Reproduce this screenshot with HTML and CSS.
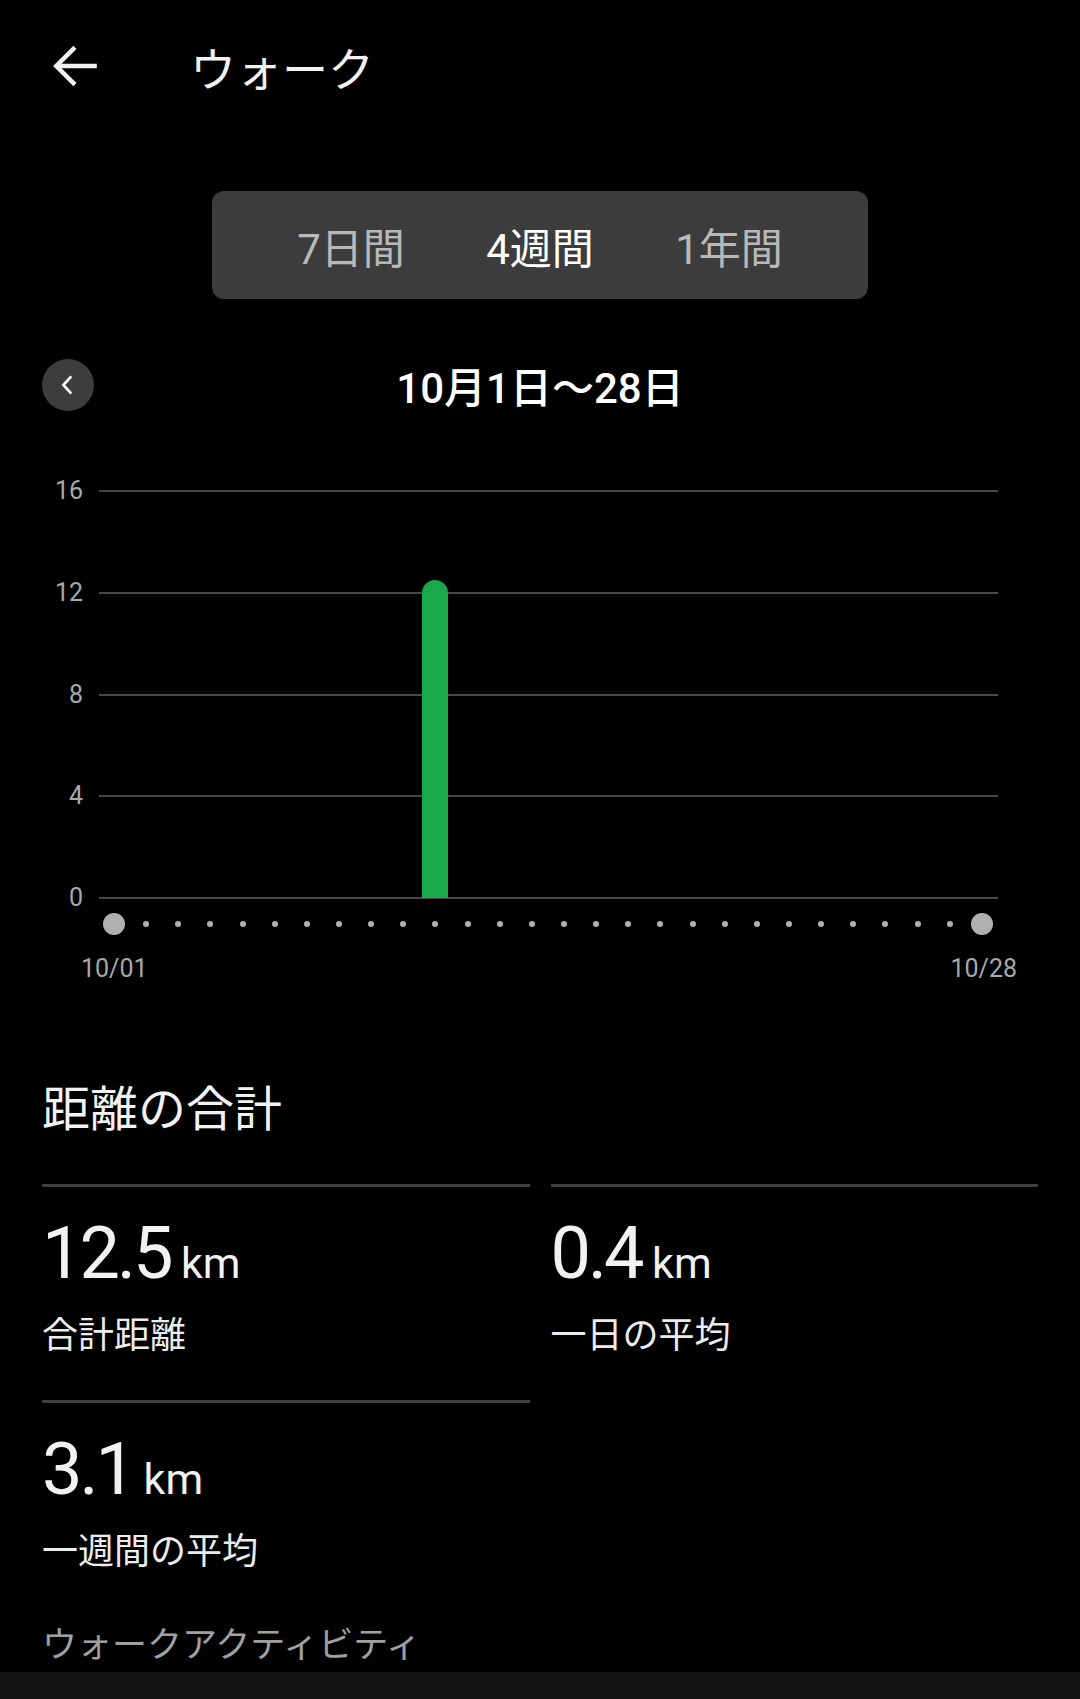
FILE: index.html
```html
<!DOCTYPE html>
<html lang="ja">
<head>
    <meta charset="utf-8">
    <title>ウォーク</title>
    <meta name="viewport" content="width=device-width, initial-scale=1">
    <link rel="stylesheet" href="styles.css">
</head>
<body>
    <header class="topbar">
        <svg class="back" viewBox="0 0 24 24"><path d="M19.8 12H4.6M11.6 5l-7 7 7 7"/></svg>
        <h1 class="title">ウォーク</h1>
    </header>

    <div class="seg">
        <span class="seg-item">7日間</span>
        <span class="seg-item active">4週間</span>
        <span class="seg-item">1年間</span>
    </div>

    <div class="daterow">
        <div class="prev"><svg viewBox="0 0 24 24"><path d="M14.5 5.5L8.5 12l6 6.5"/></svg></div>
        <div class="range">10月1日〜28日</div>
        <div></div>
    </div>

    <!-- chart: 28 days, max 16 km -->
    <div class="chart">
        <div class="plot">
            <div class="lines">
                <div class="gridrow"><span class="ylab">16</span><span class="gline"></span></div>
                <div class="gridrow"><span class="ylab">12</span><span class="gline"></span></div>
                <div class="gridrow"><span class="ylab">8</span><span class="gline"></span></div>
                <div class="gridrow"><span class="ylab">4</span><span class="gline"></span></div>
                <div class="gridrow"><span class="ylab">0</span><span class="gline"></span></div>
            </div>
            <div class="bars">
                <div class="bar" style="grid-column: 11; height: 318px"></div>
            </div>
        </div>
        <div class="days">
            <span class="dot end"></span>
            <span class="dot"></span><span class="dot"></span><span class="dot"></span><span class="dot"></span>
            <span class="dot"></span><span class="dot"></span><span class="dot"></span><span class="dot"></span>
            <span class="dot"></span><span class="dot"></span><span class="dot"></span><span class="dot"></span>
            <span class="dot"></span><span class="dot"></span><span class="dot"></span><span class="dot"></span>
            <span class="dot"></span><span class="dot"></span><span class="dot"></span><span class="dot"></span>
            <span class="dot"></span><span class="dot"></span><span class="dot"></span><span class="dot"></span>
            <span class="dot"></span><span class="dot"></span>
            <span class="dot end"></span>
        </div>
        <div class="xlabels"><span>10/01</span><span>10/28</span></div>
    </div>

    <h2 class="section-title">距離の合計</h2>
    <div class="stats">
        <div class="stat">
            <div class="num">12.5<span class="unit"> km</span></div>
            <div class="lbl">合計距離</div>
        </div>
        <div class="stat">
            <div class="num">0.4<span class="unit"> km</span></div>
            <div class="lbl">一日の平均</div>
        </div>
        <div class="stat">
            <div class="num">3.1<span class="unit"> km</span></div>
            <div class="lbl">一週間の平均</div>
        </div>
    </div>
    <div class="activity">ウォークアクティビティ</div>

    <div class="navbar"></div>
</body>
</html>
```

FILE: styles.css
```css
*{
    margin: 0px;
    padding: 0px;
    box-sizing: border-box;
}
body{
    display: flex;
    flex-direction: column;
    width: 1080px;
    height: 1699px;
    overflow: hidden;
    background: #000;
    color: #f2f2f2;
    font-family: Roboto, "Noto Sans CJK JP", sans-serif;
}

/* top bar */
.topbar{
    display: flex;
    align-items: center;
    flex-shrink: 0;
    height: 132px;
    padding-left: 44px;
}
.back{
    width: 64px;
    height: 64px;
    fill: none;
    stroke: #f2f2f2;
    stroke-width: 1.7;
}
.title{
    margin-left: 82px;
    font-size: 46px;
    font-weight: 400;
}

/* period switch */
.seg{
    display: flex;
    justify-content: center;
    align-items: center;
    flex-shrink: 0;
    width: 656px;
    height: 108px;
    margin: 59px auto 0px;
    background: #3c3c3c;
    border-radius: 12px;
}
.seg-item{
    width: 189px;
    text-align: center;
    font-size: 42px;
    color: #b9b9b9;
}
.seg-item.active{
    color: #fff;
}

/* date range */
.daterow{
    display: grid;
    grid-template-columns: 1fr auto 1fr;
    align-items: center;
    flex-shrink: 0;
    height: 52px;
    margin-top: 55px;
    padding: 0px 42px;
}
.prev{
    display: flex;
    align-items: center;
    justify-content: center;
    width: 52px;
    height: 52px;
    border-radius: 50%;
    background: #3d3d3d;
}
.prev svg{
    width: 32px;
    height: 32px;
    fill: none;
    stroke: #fff;
    stroke-width: 2;
}
.range{
    font-size: 42px;
    font-weight: 500;
    color: #fff;
}

/* chart */
.chart{
    margin-top: 84px;
}
.plot{
    display: grid;
    padding-right: 82px;
}
.lines{
    grid-area: 1 / 1;
    display: flex;
    flex-direction: column;
    justify-content: space-between;
    height: 409px;
}
.gridrow{
    display: flex;
    align-items: center;
    height: 2px;
}
.ylab{
    width: 83px;
    margin-right: 16px;
    text-align: right;
    font-size: 25px;
    line-height: 30px;
    color: #a8a8a8;
}
.gline{
    flex: 1;
    height: 2px;
    background: #474747;
}
.bars{
    grid-area: 1 / 1;
    display: grid;
    grid-template-columns: repeat(28, 1fr);
    align-items: end;
    margin-left: 98px;
    padding-bottom: 1px;
}
.bar{
    grid-row: 1;
    justify-self: center;
    width: 26px;
    background: #19a84a;
    border-radius: 13px 13px 0px 0px;
}
.days{
    display: grid;
    grid-template-columns: repeat(28, 1fr);
    align-items: center;
    justify-items: center;
    height: 22px;
    margin: 14px 82px 0px 98px;
}
.dot{
    width: 6px;
    height: 6px;
    border-radius: 50%;
    background: #b0b0b0;
}
.dot.end{
    width: 22px;
    height: 22px;
}
.xlabels{
    display: flex;
    justify-content: space-between;
    margin-top: 19px;
    padding: 0px 63px 0px 81px;
    font-size: 25px;
    line-height: 30px;
    color: #a8a8a8;
}

/* totals */
.section-title{
    margin-top: 94px;
    padding-left: 42px;
    font-size: 48px;
    font-weight: 400;
    line-height: 64px;
}
.stats{
    display: grid;
    grid-template-columns: 1fr 1fr;
    column-gap: 21px;
    margin-top: 42px;
    padding: 0px 42px;
}
.stat{
    border-top: 3px solid #3f3f3f;
    padding: 31px 0px 40px 0px;
}
.num{
    font-size: 72px;
    line-height: 72px;
    letter-spacing: -3px;
}
.unit{
    font-size: 43px;
    letter-spacing: 0px;
}
.lbl{
    margin-top: 13px;
    font-size: 36px;
    line-height: 48px;
    color: #ececec;
}
.activity{
    margin-top: 7px;
    padding-left: 42px;
    font-size: 35px;
    line-height: 46px;
    color: #a0a0a0;
}
.navbar{
    flex-shrink: 0;
    height: 27px;
    margin-top: auto;
    background: #121212;
}
```
